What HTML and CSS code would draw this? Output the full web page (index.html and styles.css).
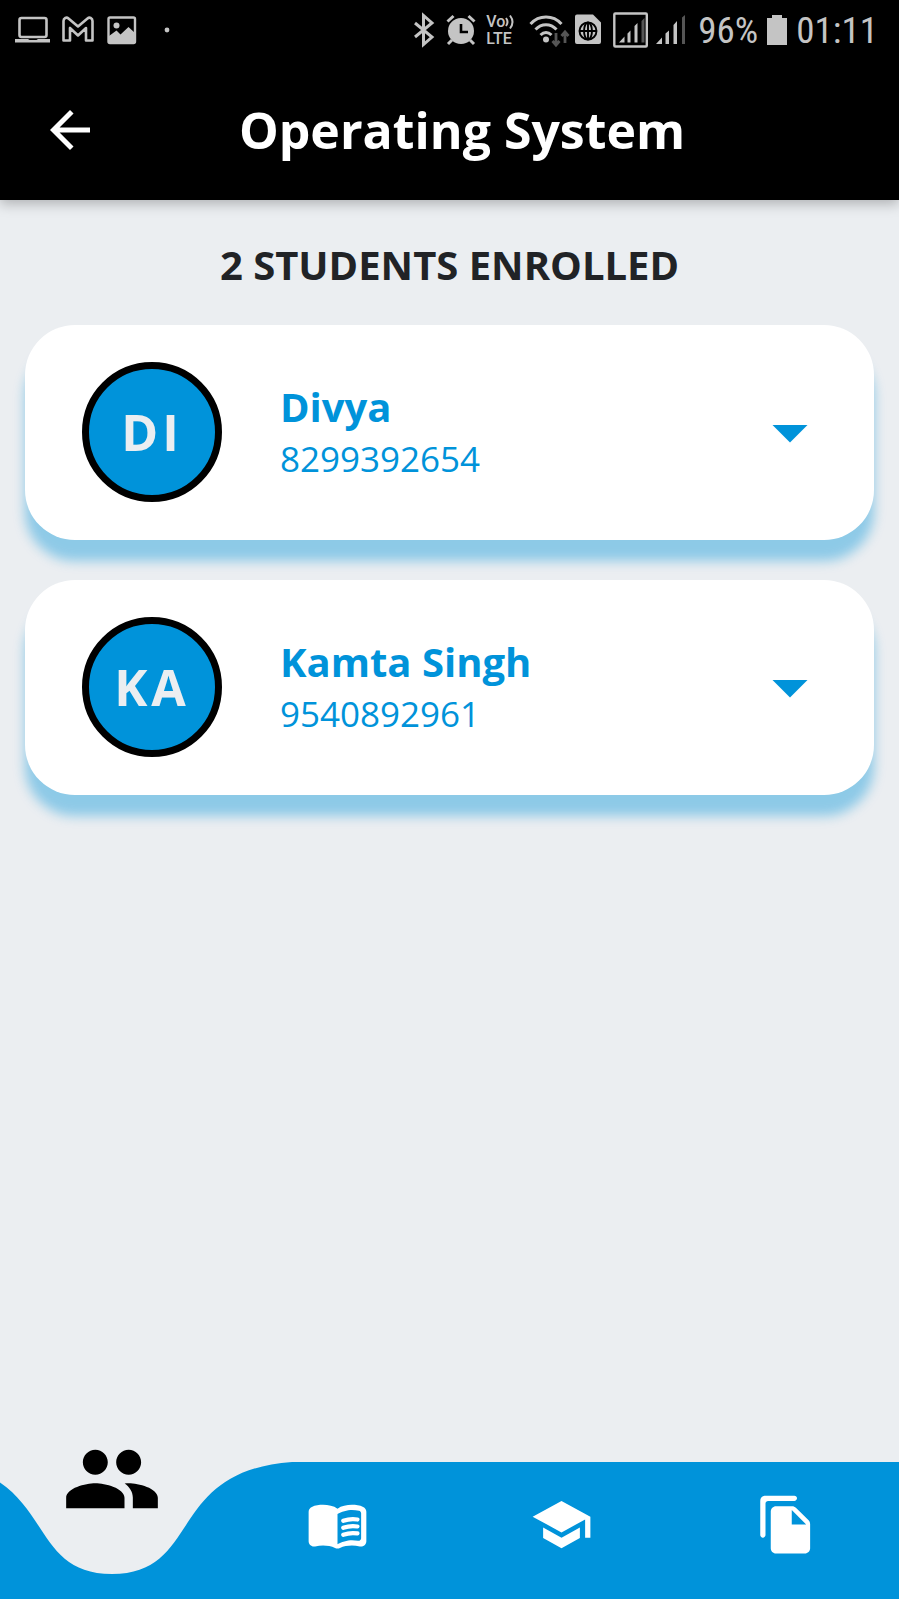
FILE: index.html
```
<!DOCTYPE html>
<html lang="en">
<head>
<meta charset="utf-8">
<meta name="viewport" content="width=device-width, initial-scale=1">
<title>Operating System</title>
<link rel="stylesheet" href="styles.css">
</head>
<body>
<div class="app">
  <div class="status">
    <div class="status-group status-left">
      <svg width="36" height="28" viewBox="0 0 36 28"><rect x="4.500" y="2" width="27" height="19" rx="2" fill="none" stroke="currentColor" stroke-width="2.600"/><path d="M0 23h13l1.500 1h7l1.500-1h12v3.500H0z" fill="currentColor"/></svg>
      <svg width="32" height="28" viewBox="0 0 32 28"><path d="M.5 24.500V5c0-3 3-4.200 5-2.500l9.500 8 9.500-8c2-1.700 5-.5 5 2.500v19.500h-6.500V12L15 19.500 7 12v12.500z" fill="none" stroke="currentColor" stroke-width="2.600" stroke-linejoin="round"/></svg>
      <svg width="30" height="28" viewBox="0 0 30 28"><rect x="1.500" y="1.500" width="26.500" height="25.500" rx="1.500" fill="none" stroke="currentColor" stroke-width="2.400"/><circle cx="9.500" cy="9.500" r="3" fill="currentColor"/><path d="M2 20l7.500-5.500 4 4 8-7.500L28 17v10H2z" fill="currentColor"/></svg>
      <svg class="dot" width="6" height="6" viewBox="0 0 6 6"><circle cx="3" cy="3" r="2.400" fill="currentColor"/></svg>
    </div>
    <div class="status-group status-right">
      <svg width="25" height="34" viewBox="0 0 25 34"><path d="M2 10l17 14-8.500 7.500v-29L19 10 2 24" fill="none" stroke="currentColor" stroke-width="3"/></svg>
      <svg width="32" height="34" viewBox="0 0 32 34"><circle cx="15" cy="18" r="13" fill="currentColor"/><path d="M1.500 8.500l6-5.500M28.500 8.500l-6-5.500M6 27l-4 4M24 27l4 4" stroke="currentColor" stroke-width="3"/><path d="M15 11v8h7" fill="none" stroke="#000" stroke-width="2.600"/></svg>
      <div class="volte">
        <div class="volte-top">Vo<svg width="9" height="14" viewBox="0 0 9 14"><path d="M1 3q3 4 0 8M5 .5q5 6.500 0 13" fill="none" stroke="currentColor" stroke-width="2"/></svg></div>
        <div>LTE</div>
      </div>
      <svg width="37" height="34" viewBox="0 0 37 34"><g fill="none" stroke="currentColor" stroke-width="3"><path d="M1.500 11c8.500-9.300 22.500-9.300 31 0M6.500 16.500c6-6.300 15-6.300 21 0M11.500 22c3.500-3.500 7.500-3.500 11 0"/></g><circle cx="17" cy="26.500" r="3" fill="currentColor"/><path d="M27 20v12M23.500 28l3.500 4 3.500-4M36 30V19M32.500 23l3.500-4 3.500 4" fill="none" stroke="#555" stroke-width="2.800"/></svg>
      <svg width="31" height="34" viewBox="0 0 31 34"><path d="M3 1.500h16l8 8V29a2 2 0 0 1-2 2H3a2 2 0 0 1-2-2V3.500a2 2 0 0 1 2-2z" fill="currentColor"/><g fill="none" stroke="#000" stroke-width="1.900"><circle cx="14" cy="18" r="8.500"/><ellipse cx="14" cy="18" rx="4" ry="8.500"/><path d="M14 9.500v17M5.500 18h17"/></g></svg>
      <svg width="35" height="36" viewBox="0 0 35 36"><rect x="1.300" y="1.500" width="32.500" height="33" rx="1" fill="none" stroke="currentColor" stroke-width="2.400"/><path d="M6 30.500l5.500-6v6zM14.500 30.500v-9l3-3v12zM21.500 30.500V14l3-3v19.500z" fill="currentColor"/><path d="M28.500 30.500V9l3-3v24.500z" fill="#555"/></svg>
      <svg width="34" height="34" viewBox="0 0 34 34"><path d="M0 31l6-6.500V31zM9.500 31V20.500l3.500-3V31zM17.500 31V12l3.500-4v23z" fill="currentColor"/><path d="M26 31V4.500L29 2v29z" fill="#555"/></svg>
      <span class="status-text">96%</span>
      <svg width="22" height="34" viewBox="0 0 22 34"><path d="M1 5h5V2h10v3h5v27H1z" fill="currentColor"/></svg>
      <span class="status-text">01:11</span>
    </div>
  </div>

  <header class="appbar">
    <button class="icon-button back" type="button" aria-label="Back">
      <svg width="60" height="60" viewBox="0 0 24 24" fill="currentColor"><path d="M20 11H7.830l5.590-5.590L12 4l-8 8 8 8 1.410-1.410L7.830 13H20v-2z"/></svg>
    </button>
    <h1 class="title">Operating System</h1>
  </header>

  <main class="content">
    <h2 class="count">2 STUDENTS ENROLLED</h2>
    <ul class="students">
      <li class="card">
        <div class="avatar">DI</div>
        <div class="info">
          <h3 class="name">Divya</h3>
          <p class="phone">8299392654</p>
        </div>
        <button class="icon-button" type="button" aria-label="Show details of Divya">
          <svg width="84" height="84" viewBox="0 0 24 24" fill="currentColor"><path d="M7 10l5 5 5-5z"/></svg>
        </button>
      </li>
      <li class="card">
        <div class="avatar">KA</div>
        <div class="info">
          <h3 class="name">Kamta Singh</h3>
          <p class="phone">9540892961</p>
        </div>
        <button class="icon-button" type="button" aria-label="Show details of Kamta Singh">
          <svg width="84" height="84" viewBox="0 0 24 24" fill="currentColor"><path d="M7 10l5 5 5-5z"/></svg>
        </button>
      </li>
    </ul>
  </main>

  <nav class="tabs" aria-label="Class sections">
    <svg class="wave" viewBox="0 0 899 137" preserveAspectRatio="none" aria-hidden="true"><path d="M-67 0C58 9 22 112 112 112S166 9 292 0H899V137H-67z" fill="#0093da"/></svg>
    <button class="tab tab-active" type="button" aria-label="Students" aria-current="page">
      <svg width="100" height="100" viewBox="0 0 24 24" fill="currentColor"><path d="M16 11c1.660 0 2.990-1.340 2.990-3S17.660 5 16 5s-3 1.340-3 3 1.340 3 3 3zM8 11c1.660 0 2.990-1.340 2.990-3S9.660 5 8 5 5 6.340 5 8s1.340 3 3 3zM8 13c-2.330 0-7 1.170-7 3.500V19h14v-2.500c0-2.330-4.670-3.500-7-3.500zM16 13c-.29 0-.62.020-.97.050 1.160.840 1.970 1.970 1.970 3.450V19h6v-2.500c0-2.330-4.670-3.500-7-3.500z"/></svg>
    </button>
    <button class="tab" type="button" aria-label="Lessons">
      <svg width="63" height="63" viewBox="0 0 24 24" fill="currentColor"><path d="M17.500 4.500c-1.950 0-4.050.4-5.500 1.500-1.450-1.100-3.550-1.500-5.500-1.500-1.450 0-2.990.22-4.280.79C1.490 5.620 1 6.330 1 7.140v11.280c0 1.300 1.220 2.260 2.480 1.940.98-.25 2.020-.36 3.020-.36 1.560 0 3.220.26 4.560.92.6.3 1.280.3 1.870 0 1.340-.67 3-.92 4.560-.92 1 0 2.040.11 3.020.36 1.260.33 2.480-.63 2.480-1.940V7.140c0-.81-.49-1.520-1.220-1.850-1.280-.57-2.820-.79-4.270-.79zM21 17.230c0 .63-.58 1.090-1.200.98-.75-.14-1.530-.2-2.300-.2-1.700 0-4.150.65-5.500 1.500V8c1.350-.85 3.800-1.500 5.500-1.500.92 0 1.830.09 2.700.28.460.1.800.51.800.98v9.470z"/><path d="M14.200 10.600c1.700-.6 3.600-.8 5.400-.5M14.200 13.250c1.700-.6 3.600-.8 5.400-.5M14.200 15.900c1.700-.6 3.600-.8 5.400-.5" fill="none" stroke="currentColor" stroke-width="1.600" stroke-linecap="round"/></svg>
    </button>
    <button class="tab" type="button" aria-label="Courses">
      <svg width="63" height="63" viewBox="0 0 24 24" fill="currentColor"><path d="M5 13.180v4L12 21l7-3.820v-4L12 17l-7-3.820zM12 3L1 9l11 6 9-4.910V17h2V9L12 3z"/></svg>
    </button>
    <button class="tab" type="button" aria-label="Files">
      <svg width="63" height="63" viewBox="0 0 24 24" fill="currentColor"><path d="M15 1H4c-1.100 0-2 .9-2 2v13c0 .55.45 1 1 1s1-.45 1-1V4c0-.55.45-1 1-1h10c.55 0 1-.45 1-1s-.45-1-1-1zM15.590 5.590l4.830 4.830c.37.370.58.880.58 1.410V21c0 1.100-.9 2-2 2H7.990C6.890 23 6 22.100 6 21l.010-14c0-1.100.89-2 1.990-2h6.170c.53 0 1.040.21 1.420.59zM14 12h5.500L14 6.500V12z"/></svg>
    </button>
  </nav>
</div>
</body>
</html>
```

FILE: styles.css
```
* {
  box-sizing: border-box;
}

body {
  margin: 0;
  background: #ebeef1;
  color: #212326;
  font-family: "Open Sans", "Noto Sans", sans-serif;
}

h1, h2, h3, p, ul {
  margin: 0;
  padding: 0;
}

svg {
  display: block;
  flex: none;
  overflow: visible;
}

button {
  padding: 0;
  border: 0;
  background: none;
  color: inherit;
  font: inherit;
  cursor: pointer;
}

.app {
  display: flex;
  flex-direction: column;
  min-height: 100vh;
}

.status {
  display: flex;
  justify-content: space-between;
  align-items: center;
  height: 60px;
  padding: 0 21px 0 15px;
  background: #000;
  color: #c4c4c4;
}

.status-group {
  display: flex;
  align-items: center;
}

.status-left {
  gap: 12px;
}

.dot {
  margin-left: 15px;
}

.status-right {
  gap: 8px;
}

.status-text {
  padding-top: 2px;
  font-family: "Roboto Condensed", Roboto, sans-serif;
  font-size: 37px;
  line-height: 40px;
}

.volte {
  width: 35px;
  font-family: Roboto, sans-serif;
  font-size: 16px;
  font-weight: 500;
  line-height: 17px;
}

.volte-top {
  display: flex;
  align-items: center;
}

.appbar {
  display: grid;
  grid-template-columns: 140px 1fr 115px;
  align-items: center;
  height: 140px;
  background: #000;
  color: #fff;
  box-shadow: 0 4px 12px rgba(0, 0, 0, 0.25);
}

.icon-button {
  flex: none;
}

.back {
  justify-self: center;
}

.title {
  font-size: 50px;
  line-height: 68px;
  text-align: center;
  white-space: nowrap;
}

.content {
  flex: 1;
  padding: 35px 25px 40px;
}

.count {
  margin-bottom: 30px;
  font-size: 40px;
  line-height: 60px;
  text-align: center;
}

.students {
  display: flex;
  flex-direction: column;
  gap: 40px;
  list-style: none;
}

.card {
  display: flex;
  align-items: center;
  padding: 37px 42px 38px 57px;
  border-radius: 50px;
  background: #fff;
  color: #0093da;
  box-shadow: 0 21px 12px rgba(0, 147, 218, 0.4);
}

.avatar {
  display: flex;
  flex: none;
  align-items: center;
  justify-content: center;
  width: 140px;
  height: 140px;
  border: 7px solid #000;
  border-radius: 50%;
  background: #0093da;
  color: #ebeef1;
  font-size: 50px;
  font-weight: 700;
  letter-spacing: 4px;
}

.info {
  flex: 1;
  padding: 2px 0 0 58px;
}

.name {
  font-size: 40px;
  line-height: 52px;
}

.phone {
  font-size: 35px;
  line-height: 52px;
}

.tabs {
  position: relative;
  display: grid;
  grid-template-columns: repeat(4, 1fr);
  align-items: start;
  height: 137px;
  color: #fff;
}

.wave {
  position: absolute;
  inset: 0;
  width: 100%;
  height: 100%;
  overflow: hidden;
}

.tab {
  position: relative;
  justify-self: center;
  margin-top: 31px;
}

.tab-active {
  margin-top: -33px;
  color: #000;
}
```
